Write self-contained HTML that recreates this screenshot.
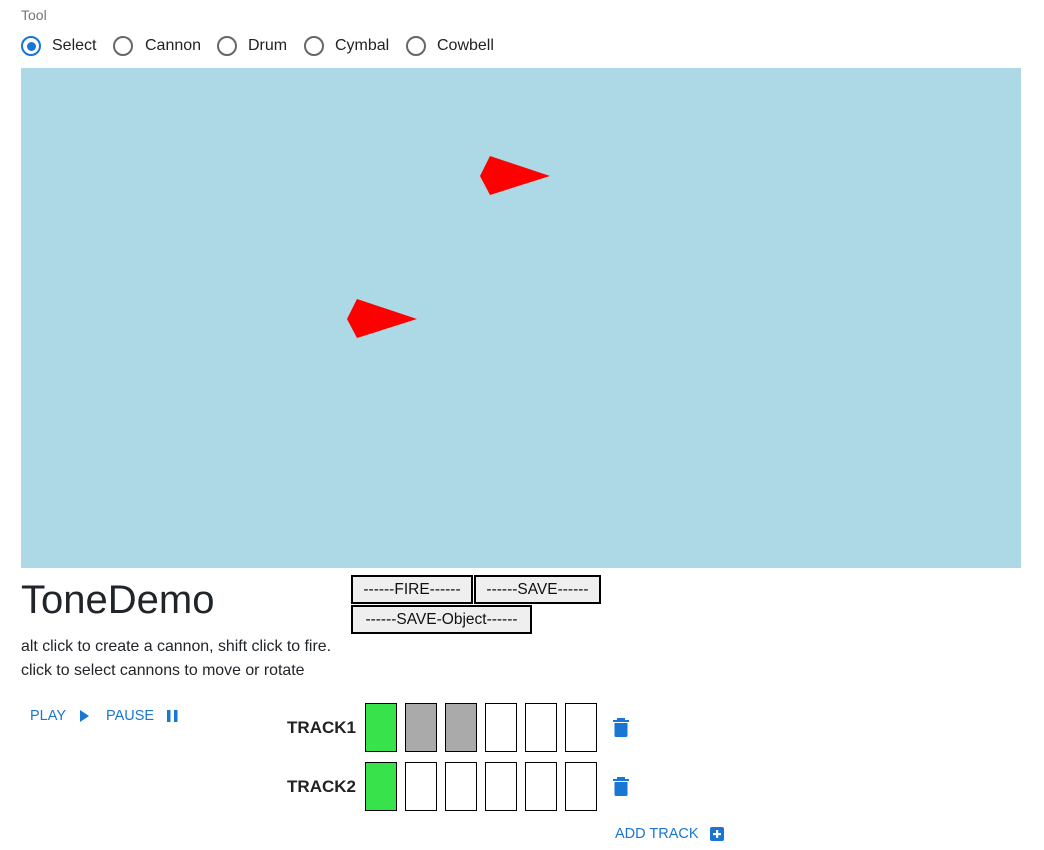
<!DOCTYPE html>
<html><head><meta charset="utf-8"><style>
body{margin:0;width:1044px;height:850px;background:#fff;position:relative;font-family:"Liberation Sans",Arial,sans-serif;overflow:hidden}
.a{position:absolute;white-space:nowrap}
.r{position:absolute;top:37px;width:16px;height:16px;border:2px solid #666;border-radius:50%}
.lbl{position:absolute;top:37px;font-size:16px;color:#222;line-height:18px}
.btn{position:absolute;height:25px;border:2px solid #000;background:#efefef;font-size:15.5px;line-height:25px;text-align:center;color:#111}
.c{position:absolute;width:30px;height:47px;border:1px solid #000;background:#fff}
.g{background:#38e24a}.gr{background:#aaa}
.blue{color:#1976d2;font-size:14.5px}
.tk{position:absolute;font-weight:bold;font-size:17px;color:#222;width:100px;text-align:right;left:256px}
</style></head><body>
<div class="a" style="left:21px;top:7px;font-size:14px;color:#777">Tool</div>
<div class="r" style="left:21px;top:36px;border-color:#1976d2"><div style="position:absolute;left:3.5px;top:3.5px;width:9px;height:9px;border-radius:50%;background:#1976d2"></div></div>
<div class="lbl" style="left:52px">Select</div>
<div class="r" style="left:113px;top:36px"></div><div class="lbl" style="left:145px">Cannon</div>
<div class="r" style="left:217px;top:36px"></div><div class="lbl" style="left:248px">Drum</div>
<div class="r" style="left:304px;top:36px"></div><div class="lbl" style="left:335px">Cymbal</div>
<div class="r" style="left:406px;top:36px"></div><div class="lbl" style="left:437px">Cowbell</div>
<svg class="a" style="left:21px;top:68px" width="1000" height="500"><rect width="1000" height="500" fill="#add8e6"/>
<polygon points="459,108 469,88 529,108 469,127" fill="#f00"/>
<polygon points="326,251 336,231 396,251 336,270" fill="#f00"/></svg>
<div class="a" style="left:21px;top:576px;font-size:40px;color:#212529;line-height:48px">ToneDemo</div>
<div class="btn" style="left:351px;top:575px;width:118px">------FIRE------</div>
<div class="btn" style="left:474px;top:575px;width:123px">------SAVE------</div>
<div class="btn" style="left:351px;top:605px;width:177px">------SAVE-Object------</div>
<div class="a" style="left:21px;top:638px;font-size:15.9px;color:#212529">alt click to create a cannon, shift click to fire.</div>
<div class="a" style="left:21px;top:662px;font-size:15.9px;color:#212529">click to select cannons to move or rotate</div>
<div class="a blue" style="left:30px;top:708px">PLAY</div>
<svg class="a" style="left:80px;top:710px" width="10" height="12"><polygon points="0,0 9,6 0,12" fill="#1976d2"/></svg>
<div class="a blue" style="left:106px;top:708px">PAUSE</div>
<svg class="a" style="left:167px;top:710px" width="12" height="12"><rect x="0" width="3.5" height="12" fill="#1976d2"/><rect x="7" width="3.5" height="12" fill="#1976d2"/></svg>
<div class="tk" style="top:718px">TRACK1</div>
<div class="tk" style="top:777px">TRACK2</div>
<div class="c g" style="left:365px;top:703px"></div><div class="c gr" style="left:405px;top:703px"></div><div class="c gr" style="left:445px;top:703px"></div><div class="c" style="left:485px;top:703px"></div><div class="c" style="left:525px;top:703px"></div><div class="c" style="left:565px;top:703px"></div>
<div class="c g" style="left:365px;top:762px"></div><div class="c" style="left:405px;top:762px"></div><div class="c" style="left:445px;top:762px"></div><div class="c" style="left:485px;top:762px"></div><div class="c" style="left:525px;top:762px"></div><div class="c" style="left:565px;top:762px"></div>
<svg class="a" style="left:613px;top:718px" width="16" height="20"><rect x="4" y="0" width="8" height="2" fill="#1976d2"/><rect x="0" y="2" width="16" height="2" fill="#1976d2"/><path d="M1.5 5H14.5V17.5Q14.5 19 13 19H3Q1.5 19 1.5 17.5Z" fill="#1976d2"/></svg>
<svg class="a" style="left:613px;top:777px" width="16" height="20"><rect x="4" y="0" width="8" height="2" fill="#1976d2"/><rect x="0" y="2" width="16" height="2" fill="#1976d2"/><path d="M1.5 5H14.5V17.5Q14.5 19 13 19H3Q1.5 19 1.5 17.5Z" fill="#1976d2"/></svg>
<div class="a blue" style="left:615px;top:826px">ADD TRACK</div>
<svg class="a" style="left:710px;top:827px" width="14" height="14"><rect width="14" height="14" rx="2" fill="#1976d2"/><rect x="6" y="3" width="2.2" height="8" fill="#fff"/><rect x="3" y="6" width="8" height="2.2" fill="#fff"/></svg>
</body></html>
